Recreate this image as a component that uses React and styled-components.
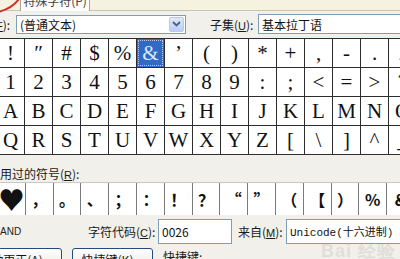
import React from "react";
import styled, { createGlobalStyle } from "styled-components";

const GlobalStyle = createGlobalStyle`
  html, body { margin: 0; padding: 0; background: #f1f0ea; }
  body { width: 400px; height: 259px; overflow: hidden; }
`;

const Dialog = styled.div`
  position: relative;
  width: 400px;
  height: 259px;
  overflow: hidden;
  background: #f1f0ea;
  display: flex;
  flex-direction: column;
  font-family: "Noto Sans CJK SC", "Noto Sans", sans-serif;
  font-size: 12px;
  color: #151515;
`;

const TabStrip = styled.div`
  flex: 0 0 10px;
  display: flex;
  align-items: flex-end;
  background: #f5f2df;
  border-bottom: 1px solid #c8c5b2;
  padding-left: 20px;
`;

const Tab = styled.div`
  width: 68px;
  height: 11px;
  margin-bottom: -1px;
  overflow: hidden;
  background: #fbfbf9;
  border-left: 1px solid #a8a596;
  border-right: 1px solid #a8a596;
  color: #444;
  font-size: 12px;
  line-height: 12px;
  text-align: center;

  span {
    display: block;
    margin-top: -5px;
  }
`;

const Row = styled.div`
  display: flex;
  align-items: center;
  flex-shrink: 0;
  height: ${(p) => p.$h}px;
  margin-top: ${(p) => p.$mt || 0}px;
  gap: ${(p) => p.$gap || 0}px;
`;

const Label = styled.span`
  flex-shrink: 0;
  white-space: nowrap;
  width: ${(p) => (p.$w ? `${p.$w}px` : "auto")};
  margin-left: ${(p) => p.$ml || 0}px;
  font-size: 12px;
  color: #1a1a1a;

  u {
    font-family: "Liberation Sans", sans-serif;
    font-size: 11px;
  }
`;

const Box = styled.div`
  flex-shrink: 0;
  box-sizing: border-box;
  width: ${(p) => p.$w}px;
  height: ${(p) => p.$h || 20}px;
  border: 1px solid #7f9db9;
  background: #fff;
  display: flex;
  align-items: center;
  padding-left: 3px;
  padding-right: 1px;
  white-space: nowrap;
  overflow: hidden;
  font-family: ${(p) =>
    p.$mono
      ? '"Liberation Mono", "Noto Sans CJK SC", monospace'
      : '"Noto Sans CJK SC", "Liberation Sans", sans-serif'};
  font-size: ${(p) => (p.$mono ? 11 : 12)}px;
  color: #111;
`;

const BoxText = styled.span`
  flex: 1;
`;

const ArrowButton = styled.span`
  width: 15px;
  height: 15px;
  border-radius: 2px;
  background: linear-gradient(#dfe8fd, #b9cdf7);
  border: 1px solid #b4c8f0;
  display: flex;
  align-items: center;
  justify-content: center;
  box-sizing: border-box;
`;

const CharGrid = styled.div`
  flex-shrink: 0;
  display: grid;
  grid-template-columns: repeat(15, 27px);
  grid-auto-rows: 28px;
  gap: 1px;
  padding: 1px;
  width: 421px;
  margin-left: -4px;
  margin-top: ${(p) => p.$mt}px;
  background: #2d2d2d;
`;

const Cell = styled.div`
  background: ${(p) => (p.$sel ? "#316ac5" : "#fff")};
  color: ${(p) => (p.$sel ? "#dbe6fb" : "#111")};
  outline: ${(p) => (p.$sel ? "1px dotted #b9cdf2" : "none")};
  outline-offset: -2px;
  display: flex;
  align-items: center;
  justify-content: center;
  font-family: "Liberation Serif", "DejaVu Serif", serif;
  font-size: 21px;
  line-height: 1;
`;

const RecentGrid = styled.div`
  flex-shrink: 0;
  display: grid;
  grid-template-columns: repeat(15, 26.8px);
  grid-auto-rows: 32px;
  gap: 1px;
  width: 420px;
  margin-left: -2px;
  background: #7a7a7a;
  border-top: 1px solid #c9c9c9;
`;

const RecentCell = styled.div`
  background: #fff;
  display: flex;
  align-items: center;
  justify-content: center;
  font-family: "Noto Sans CJK SC", sans-serif;
  font-size: ${(p) => (p.$big ? 26 : 16)}px;
  font-weight: 700;
  color: #111;
  line-height: 1;
`;

const SmallCaps = styled.span`
  flex-shrink: 0;
  width: 88px;
  font-family: "Liberation Sans", sans-serif;
  font-size: 10px;
  color: #222;
`;

const Button = styled.div`
  flex-shrink: 0;
  box-sizing: border-box;
  width: ${(p) => p.$w}px;
  height: 22px;
  margin-left: ${(p) => p.$ml || 0}px;
  border: 1px solid #23497d;
  border-radius: 3px;
  background: linear-gradient(#ffffff, #ecebe6 80%, #d6d0c5);
  display: flex;
  justify-content: center;
  padding-top: 2px;
  font-size: 12px;
  white-space: nowrap;
  overflow: hidden;
`;

const Circle = styled.svg`
  position: absolute;
  left: 0;
  top: 0;
`;

const Watermark = styled.div`
  position: absolute;
  right: 4px;
  bottom: -4px;
  font-family: "Liberation Sans", sans-serif;
  font-size: 18px;
  font-weight: 700;
  color: rgba(160, 160, 160, 0.22);
  letter-spacing: 1px;
`;

const rows = [
  ["!", "″", "#", "$", "%", "&", "’", "(", ")", "*", "+", ",", "-", ".", "/"],
  ["1", "2", "3", "4", "5", "6", "7", "8", "9", ":", ";", "<", "=", ">", "?"],
  ["A", "B", "C", "D", "E", "F", "G", "H", "I", "J", "K", "L", "M", "N", "O"],
  ["Q", "R", "S", "T", "U", "V", "W", "X", "Y", "Z", "[", "\\", "]", "^", "_"],
];

const recent = ["♥", "，", "。", "、", "；", "：", "！", "？", "“", "”", "（", "【", "）", "%", "&"];

export default function App() {
  return (
    <Dialog>
      <GlobalStyle />
      <TabStrip>
        <Tab>
          <span>特殊字符(P)</span>
        </Tab>
      </TabStrip>

      <Row $h={26}>
        <Label $w={48} $ml={-32}>
          字体(<u>F</u>):
        </Label>
        <Box $w={170} $h={19}>
          <BoxText>(普通文本)</BoxText>
          <ArrowButton>
            <svg width="9" height="6" viewBox="0 0 9 6">
              <path d="M1 1 L4.5 4.5 L8 1" stroke="#4d6185" strokeWidth="1.8" fill="none" />
            </svg>
          </ArrowButton>
        </Box>
        <Label $w={48} $ml={24}>
          子集(<u>U</u>):
        </Label>
        <Box $w={160} $h={20}>
          <BoxText>基本拉丁语</BoxText>
        </Box>
      </Row>

      <CharGrid $mt={1}>
        {rows.flat().map((c, i) => (
          <Cell key={i} $sel={c === "&"}>
            {c}
          </Cell>
        ))}
      </CharGrid>

      <Row $h={18} $mt={9}>
        <Label $ml={-36}>
          近期使用过的符号(<u>R</u>):
        </Label>
      </Row>

      <RecentGrid>
        {recent.map((c, i) => (
          <RecentCell key={i} $big={i === 0}>
            {c}
          </RecentCell>
        ))}
      </RecentGrid>

      <Row $h={26} $mt={3}>
        <SmallCaps>AND</SmallCaps>
        <Label $w={70}>
          字符代码(<u>C</u>):
        </Label>
        <Box $w={74} $h={25}>
          <BoxText>0026</BoxText>
        </Box>
        <Label $w={48} $ml={6}>
          来自(<u>M</u>):
        </Label>
        <Box $w={120} $h={25} $mono>
          <BoxText>Unicode(十六进制)</BoxText>
        </Box>
      </Row>

      <Row $h={14} $mt={4} style={{ alignItems: "flex-start" }}>
        <Button $w={92} $ml={-30}>
          自动更正(<u>A</u>)...
        </Button>
        <Button $w={81} $ml={10}>
          快捷键(<u>K</u>)...
        </Button>
        <Label $ml={10}>快捷键:</Label>
      </Row>

      <Circle width="24" height="14" viewBox="0 0 24 14">
        <path d="M-2 12 C 6 10, 14 6, 19 -1" stroke="#d0302a" strokeWidth="2" fill="none" />
      </Circle>
      <Watermark>Bai 经验</Watermark>
    </Dialog>
  );
}
